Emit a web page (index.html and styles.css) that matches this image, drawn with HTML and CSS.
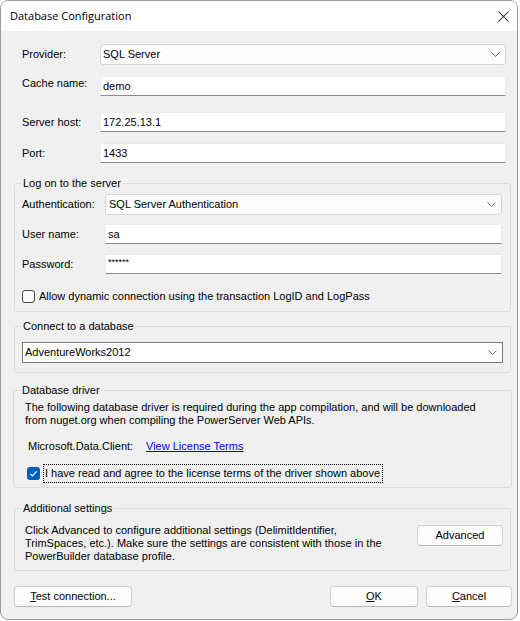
FILE: index.html
```html
<!DOCTYPE html>
<html>
<head>
<meta charset="utf-8">
<link rel="stylesheet" href="styles.css">
</head>
<body>
<div class="window">
  <div class="titlebar">
    <span class="title">Database Configuration</span>
    <svg class="close" width="11" height="11" viewBox="0 0 11 11"><path d="M0.5 0.5L10.5 10.5M10.5 0.5L0.5 10.5" stroke="#1c1c1c" stroke-width="1.05" fill="none"/></svg>
  </div>
  <div class="body">
    <div class="topform">
      <div class="row">
        <span class="lbl">Provider:</span>
        <div class="combo w-top"><span>SQL Server</span><svg class="chev" width="9" height="5" viewBox="0 0 9 5"><path d="M0.5 0.5L4.5 4.5L8.5 0.5" stroke="#707070" fill="none"/></svg></div>
      </div>
      <div class="row gap11 top-lbl">
        <span class="lbl">Cache name:</span>
        <div class="textbox w-top">demo</div>
      </div>
      <div class="row gap16">
        <span class="lbl">Server host:</span>
        <div class="textbox w-top">172.25.13.1</div>
      </div>
      <div class="row gap11">
        <span class="lbl">Port:</span>
        <div class="textbox w-top">1433</div>
      </div>
    </div>

    <div class="group g-log">
      <span class="legend lg0">Log on to the server</span>
      <div class="grow g4">
        <span class="lbl2">Authentication:</span>
        <div class="combo w-log"><span class="pad3">SQL Server Authentication</span><svg class="chev" width="9" height="5" viewBox="0 0 9 5"><path d="M0.5 0.5L4.5 4.5L8.5 0.5" stroke="#707070" fill="none"/></svg></div>
      </div>
      <div class="grow g9">
        <span class="lbl2">User name:</span>
        <div class="textbox w-log">sa</div>
      </div>
      <div class="grow g10">
        <span class="lbl2">Password:</span>
        <div class="textbox w-log pw">******</div>
      </div>
      <div class="chkrow">
        <span class="chk"></span>
        <span class="chktext">Allow dynamic connection using the transaction LogID and LogPass</span>
      </div>
    </div>

    <div class="group g-conn">
      <span class="legend lg0">Connect to a database</span>
      <div class="combo classic w-conn"><span>AdventureWorks2012</span><svg class="chev" width="9" height="5" viewBox="0 0 9 5"><path d="M0.5 0.5L4.5 4.5L8.5 0.5" stroke="#707070" fill="none"/></svg></div>
    </div>

    <div class="group g-drv">
      <span class="legend lg-drv">Database driver</span>
      <p class="desc">The following database driver is required during the app compilation, and will be downloaded from nuget.org when compiling the PowerServer Web APIs.</p>
      <div class="mdc">
        <span class="mdclbl">Microsoft.Data.Client:</span>
        <a class="link">View License Terms</a>
      </div>
      <div class="agree">
        <span class="chk checked"><svg width="13" height="13" viewBox="0 0 13 13"><path d="M3.3 6.8L5.5 9L9.8 4.4" stroke="#fff" stroke-width="1.1" fill="none"/></svg></span>
        <span class="focus">I have read and agree to the license terms of the driver shown above</span>
      </div>
    </div>

    <div class="group g-add">
      <span class="legend lg-add">Additional settings</span>
      <div class="addrow">
        <p class="addtext">Click Advanced to configure additional settings (DelimitIdentifier,<br>TrimSpaces, etc.). Make sure the settings are consistent with those in the<br>PowerBuilder database profile.</p>
        <button class="btn adv">Advanced</button>
      </div>
    </div>

    <div class="buttons">
      <button class="btn test"><u>T</u>est connection...</button>
      <span class="spacer"></span>
      <button class="btn ok"><u>O</u>K</button>
      <button class="btn cancel"><u>C</u>ancel</button>
    </div>
  </div>
</div>
</body>
</html>
```

FILE: styles.css
```css
* { box-sizing: border-box; }
html, body { margin: 0; padding: 0; }
body {
  background: #ffffff;
  width: 520px;
  height: 621px;
  overflow: hidden;
  font-family: "Liberation Sans", Arial, sans-serif;
  font-size: 11px;
  line-height: 13px;
  color: #000;
}
.window {
  width: 518px;
  height: 620px;
  border: 1px solid #9c9c9c;
  border-radius: 8px;
  overflow: hidden;
  background: #f0f0f0;
  display: flex;
  flex-direction: column;
}
.titlebar {
  height: 30px;
  flex: none;
  background: #ffffff;
  display: flex;
  align-items: center;
  justify-content: space-between;
  padding: 0 8px 1px 9px;
}
.title {
  font-family: "Open Sans", "Noto Sans", sans-serif;
  font-size: 11px;
  color: #000;
}
.close { display: block; margin-top: 1px; }
.body {
  flex: 1;
  display: flex;
  flex-direction: column;
  padding-top: 13px;
}

/* top form */
.topform { padding-left: 21px; display: flex; flex-direction: column; }
.row { display: flex; align-items: center; }
.row .lbl { width: 78px; flex: none; }
.gap11 { margin-top: 11px; }
.gap16 { margin-top: 16px; }
.top-lbl { align-items: flex-start; }
.top-lbl .lbl { padding-top: 1px; }
.w-top { width: 406px; }

.combo {
  height: 21px;
  background: #fcfcfc;
  border: 1px solid #d4d4d4;
  border-radius: 3px;
  display: flex;
  align-items: center;
  justify-content: space-between;
  padding: 0 5px 0 2px;
}
.combo.classic {
  background: #ffffff;
  border-color: #7a7a7a;
  border-radius: 0;
}
.chev { display: block; flex: none; }
.pad3 { padding-left: 1px; }
.textbox {
  height: 20px;
  background: #ffffff;
  border: 1px solid #ebebeb;
  border-bottom-color: #8c8c8c;
  padding: 0 2px;
  display: flex;
  align-items: center;
}
.pw { font-size: 9px; padding-bottom: 3px; }

/* groups */
.group {
  border: 1px solid #dcdcdc;
  border-radius: 3px;
  display: flex;
  flex-direction: column;
  margin-left: 13px;
  width: 497px;
}
.legend {
  align-self: flex-start;
  margin-top: -7px;
  padding: 0 1px;
  background: #f0f0f0;
  height: 13px;
  line-height: 13px;
}
.lg0 { margin-left: 0; }
.lg-drv { margin-left: -4px; }
.lg-add { margin-left: -3px; }

.g-log { margin-top: 20px; padding: 0 0 8px 7px; }
.grow { display: flex; align-items: center; }
.lbl2 { width: 83px; flex: none; }
.w-log { width: 397px; }
.g4 { margin-top: 4px; }
.g9 { margin-top: 9px; }
.g10 { margin-top: 10px; }
.chkrow { display: flex; align-items: center; margin-top: 16px; height: 13px; }
.chk {
  width: 13px;
  height: 13px;
  border: 1px solid #4a4a4a;
  border-radius: 3px;
  background: #fbfbfb;
  flex: none;
}
.chk.checked {
  border: none;
  background: #005fb8;
}
.chk svg { display: block; }
.chktext { margin-left: 4px; }

.g-conn { margin-top: 14px; padding: 0 0 9px 7px; }
.w-conn { width: 481px; margin-top: 9px; }

.g-drv { margin-top: 17px; margin-left: 12px; width: 499px; padding: 0 0 5px 11px; }
.desc { margin: 4px 0 0 0; width: 470px; }
.mdc { display: flex; align-items: center; height: 14px; margin-top: 12px; padding-left: 3px; }
.mdclbl { width: 118px; flex: none; }
.link { color: #0000ee; text-decoration: underline; }
.agree { display: flex; align-items: center; height: 17px; margin-top: 12px; padding-left: 2px; }
.focus {
  margin-left: 4px;
  outline: 1px dotted #000;
  outline-offset: 0;
  padding: 2px 2px 2px 1px;
}

.g-add { margin-top: 20px; padding: 0 7px 7px 10px; }
.addrow { display: flex; align-items: flex-start; justify-content: space-between; margin-top: 9px; }
.addtext { margin: 0; width: 385px; white-space: nowrap; }
.btn {
  font-family: "Liberation Sans", Arial, sans-serif;
  font-size: 11px;
  color: #000;
  height: 21px;
  background: #fdfdfd;
  border: 1px solid #d0d0d0;
  border-bottom-color: #b9b9b9;
  border-radius: 4px;
  padding: 0;
  line-height: 13px;
}
.adv { width: 86px; margin-top: 1px; }

.buttons { display: flex; margin-top: 15px; padding: 0 5px 0 13px; }
.test { width: 118px; }
.spacer { flex: 1; }
.ok { width: 88px; }
.cancel { width: 86px; margin-left: 8px; }
```
